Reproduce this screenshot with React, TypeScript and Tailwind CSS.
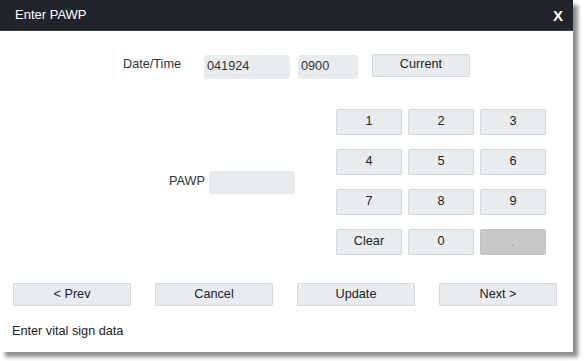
import React from 'react';

const keys = ['1', '2', '3', '4', '5', '6', '7', '8', '9', 'Clear', '0', '.'];
const navButtons = ['< Prev', 'Cancel', 'Update', 'Next >'];

const btn =
  'bg-[#e9ecef] border border-[#d4d7da] rounded-[2px] text-[12.7px] text-[#222] flex items-center justify-center';

const App: React.FC = () => {
  return (
    <div className="w-[584px] h-[361px] bg-white" style={{ fontFamily: '"Liberation Sans", Arial, sans-serif' }}>
      <div className="w-[573px] h-[352px] bg-white flex flex-col shadow-[5px_5px_4px_rgba(0,0,0,0.45)]">
        {/* header */}
        <div className="h-[31px] bg-[#212529] flex items-center justify-between pl-[15px] pr-[10px] border-b border-[#3a3f44]">
          <span className="text-white text-[13px]">Enter PAWP</span>
          <span className="text-white text-[15px] font-bold leading-none">X</span>
        </div>

        {/* date/time row */}
        <div className="flex items-center mt-[21px] h-[26px]">
          <span className="ml-[123px] w-[81px] text-[12.7px] text-[#333]">Date/Time</span>
          <div className="w-[86px] h-[24px] bg-[#e9ecef] rounded-[3px] text-[12.7px] text-[#333] pl-[3px] flex items-center mt-[3px]">041924</div>
          <div className="ml-[8px] w-[60px] h-[24px] bg-[#e9ecef] rounded-[3px] text-[12.7px] text-[#333] pl-[3px] flex items-center mt-[3px]">0900</div>
          <div className={`${btn} ml-[14px] w-[98px] h-[23px]`}>Current</div>
        </div>

        {/* value + keypad */}
        <div className="flex items-center mt-[31px]">
          <div className="flex items-center ml-[169px] w-[167px]">
            <span className="text-[12.7px] text-[#333] w-[40px]">PAWP</span>
            <div className="w-[86px] h-[23px] bg-[#e9ecef] rounded-[3px]" />
          </div>
          <div className="grid grid-cols-[66px_66px_66px] auto-rows-[26px] gap-x-[6px] gap-y-[14px]">
            {keys.map((k) =>
              k === '.' ? (
                <div key={k} className="bg-[#c8c8c8] border border-[#c2c2c2] rounded-[2px] text-[10px] text-[#777] flex items-center justify-center">
                  .
                </div>
              ) : (
                <div key={k} className={btn}>
                  {k}
                </div>
              )
            )}
          </div>
        </div>

        {/* nav row */}
        <div className="flex mt-[28px] ml-[13px] gap-x-[24px]">
          {navButtons.map((b) => (
            <div key={b} className={`${btn} w-[118px] h-[23px]`}>
              {b}
            </div>
          ))}
        </div>

        <div className="mt-[16px] ml-[12px] text-[12.7px] text-[#222]">Enter vital sign data</div>
      </div>
    </div>
  );
};

export default App;
